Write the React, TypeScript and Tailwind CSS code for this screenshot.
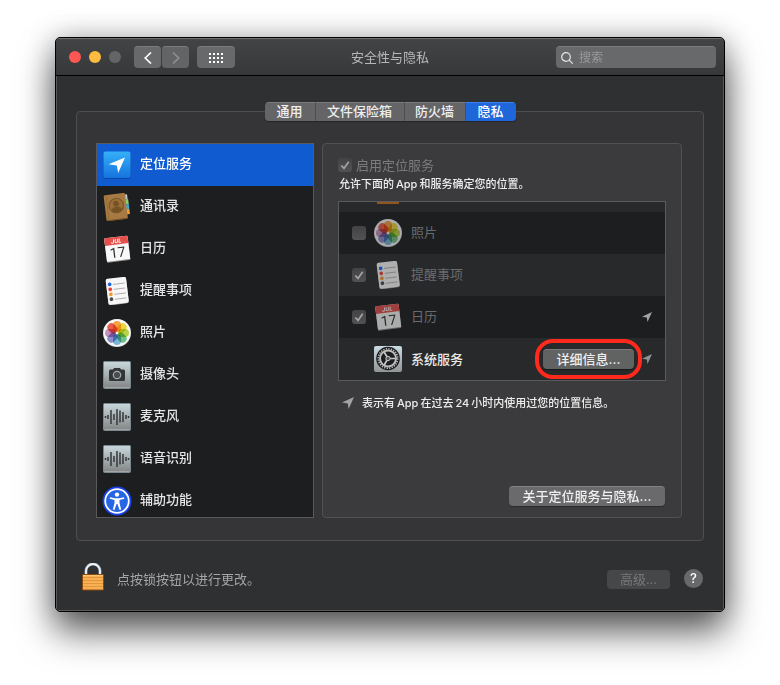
import React from "react";

type IconProps = { className?: string };

function LocationArrow({ className }: IconProps) {
  return (
    <svg viewBox="0 0 12 12" className={className} aria-hidden="true">
      <path d="M12 0 6.6 12 5.8 6.6 0 5.6Z" fill="currentColor" />
    </svg>
  );
}

function LocationIcon() {
  return (
    <svg viewBox="0 0 28 28" className="size-7" aria-hidden="true">
      <defs>
        <linearGradient id="loc" x1="0" y1="0" x2="0" y2="1">
          <stop offset="0" stopColor="#35b0f8" />
          <stop offset="1" stopColor="#1673df" />
        </linearGradient>
      </defs>
      <rect x="0.5" y="1" width="27" height="27" rx="2" fill="#0a48a8" />
      <rect x="0.5" y="0.5" width="27" height="26.5" rx="2" fill="url(#loc)" />
      <path d="M22 6.5 15.2 22l-1.4-7.4-8.300-1.300Z" fill="#fff" />
    </svg>
  );
}

function ContactsIcon() {
  return (
    <svg viewBox="0 0 28 28" className="size-7" aria-hidden="true">
      <g transform="rotate(-7 14 14)">
        <rect x="21" y="2.500" width="4.500" height="5" fill="#b9c4cc" />
        <rect x="21" y="7.500" width="5" height="5" fill="#8ccf6a" />
        <rect x="21" y="12.500" width="5" height="5" fill="#35a8dc" />
        <rect x="21" y="17.500" width="5" height="5" fill="#eda03c" />
        <rect x="2" y="0.800" width="21.500" height="26" rx="1.500" fill="#a67a42" />
        <path d="M2.500 26.500h20.500" stroke="#765226" />
        <path d="M4.500 1v25.500" stroke="#96692f" strokeWidth="0.800" />
        <circle cx="13.500" cy="12.500" r="7.200" fill="#9a6e37" stroke="#765226" />
        <circle cx="13.500" cy="10.600" r="2.900" fill="#765226" />
        <path d="M8.300 17.200c.8-3 3-3.400 5.200-3.400s4.400.4 5.200 3.400c-2.800 3-7.600 3-10.400 0Z" fill="#765226" />
      </g>
    </svg>
  );
}

function CalendarIcon() {
  return (
    <svg viewBox="0 0 28 28" className="size-7" aria-hidden="true">
      <g transform="rotate(-7 14 14)">
        <rect x="2.500" y="3" width="23.500" height="23.500" rx="1" fill="#8f8f8f" />
        <rect x="2.500" y="2" width="23.500" height="23.500" rx="1" fill="#f8f8f8" />
        <path d="M2.500 3a1 1 0 0 1 1-1h21.500a1 1 0 0 1 1 1v6.500h-23.500Z" fill="#e5504c" />
        <text x="14.200" y="8" fontSize="5.500" fontWeight="700" fontStyle="italic" textAnchor="middle" fill="#fff" fontFamily="Inter, sans-serif">JUL</text>
        <text x="14.200" y="22.300" fontSize="14" fontWeight="400" textAnchor="middle" fill="#303030" fontFamily="Roboto, sans-serif">17</text>
      </g>
    </svg>
  );
}

const reminderDots = ["#2065e8", "#ea4335", "#f39a2e", "#4b4b50"];

function RemindersIcon() {
  return (
    <svg viewBox="0 0 28 28" className="size-7" aria-hidden="true">
      <g transform="rotate(-7 14 14)">
        <rect x="4" y="1.500" width="20.500" height="26" rx="2" fill="#999" />
        <rect x="4" y="0.800" width="20.500" height="26" rx="2" fill="#f7f7f7" />
        {reminderDots.map((color, i) => (
          <g key={color}>
            <circle cx="7.500" cy={6.5 + i * 5} r="1.900" fill={color} />
            <path d={`M11 ${7 + i * 5}h11.500`} stroke="#aaa" strokeWidth="0.900" />
          </g>
        ))}
      </g>
    </svg>
  );
}

const petals = ["#f9a12e", "#f2d928", "#b5d43a", "#66c07c", "#6bb5dc", "#8486cc", "#c38bbf", "#f0503c"];

function PhotosIcon() {
  return (
    <svg viewBox="0 0 28 28" className="size-7" aria-hidden="true">
      <circle cx="14" cy="14" r="14" fill="#d2d2d2" />
      <circle cx="14" cy="13.800" r="13.500" fill="#f8f8f8" />
      {petals.map((color, i) => (
        <rect
          key={color}
          x="10"
          y="2"
          width="8"
          height="10.800"
          rx="4"
          fill={color}
          opacity="0.900"
          className="mix-blend-multiply"
          transform={`rotate(${i * 45} 14 14)`}
        />
      ))}
    </svg>
  );
}

function MetalTile({ children }: { children: React.ReactNode }) {
  return (
    <svg viewBox="0 0 28 28" className="size-7" aria-hidden="true">
      <defs>
        <linearGradient id="metal" x1="0" y1="0" x2="0" y2="1">
          <stop offset="0" stopColor="#c9d8dd" />
          <stop offset="1" stopColor="#828484" />
        </linearGradient>
      </defs>
      <rect x="0.500" y="0.500" width="27" height="27" rx="1" fill="url(#metal)" stroke="#79898f" />
      <path d="M1.500 26.500h25" stroke="#a5a5a5" />
      {children}
    </svg>
  );
}

function CameraIcon() {
  return (
    <MetalTile>
      <path d="M7.500 8.500h2.500l1-1.500h6l1 1.500h2.500a1.500 1.500 0 0 1 1.500 1.500v8.500a1.500 1.500 0 0 1-1.500 1.500h-13a1.500 1.500 0 0 1-1.500-1.500v-8.500a1.500 1.500 0 0 1 1.500-1.500Z" fill="#333537" />
      <circle cx="14" cy="14" r="3.700" fill="#4a4c4e" stroke="#a2adb1" strokeWidth="1.200" />
    </MetalTile>
  );
}

function WaveIcon() {
  return (
    <MetalTile>
      <path
        d="M2.500 13v2M5 12v4M8 7v14M11 11v6M14 6v16M17 7.500v12M20 9v10M23 12v4M25.500 13v2"
        stroke="#35393b"
        strokeWidth="1.500"
      />
    </MetalTile>
  );
}

function AccessibilityIcon() {
  return (
    <svg viewBox="0 0 30 30" className="-m-px size-[30px]" aria-hidden="true">
      <circle cx="15" cy="15" r="14.500" fill="#1740e8" />
      <circle cx="15" cy="15" r="11.800" fill="#2566e4" stroke="#fff" strokeWidth="1.800" />
      <circle cx="15" cy="8.600" r="2.200" fill="#fff" />
      <path d="M8 11.200l5 1h4l5-1 .3 1.500-4.800 1.300v3l1.700 6.600-1.600.5-2.200-6.100h-.8l-2.200 6.100-1.600-.5 1.700-6.600v-3l-4.800-1.300Z" fill="#fff" />
    </svg>
  );
}

function GearIcon() {
  return (
    <svg viewBox="0 0 28 28" className="size-7" aria-hidden="true">
      <defs>
        <linearGradient id="gearbg" x1="0" y1="0" x2="0" y2="1">
          <stop offset="0" stopColor="#c9dbe3" />
          <stop offset="1" stopColor="#929596" />
        </linearGradient>
      </defs>
      <rect x="0" y="1" width="28" height="26" rx="2" fill="url(#gearbg)" />
      <circle cx="14" cy="13.500" r="11.800" fill="#1d1e1f" />
      <circle cx="14" cy="13.500" r="9.700" fill="none" stroke="#bdbdbd" strokeWidth="1.600" strokeDasharray="1.300 1.239" />
      <circle cx="14" cy="13.500" r="8" fill="none" stroke="#bdbdbd" strokeWidth="2" />
      <path d="M14 13.500h7.500M14 13.500l-3.800-6.500M14 13.500l-3.800 6.500" stroke="#c8c8c8" strokeWidth="1.700" />
      <circle cx="14" cy="13.500" r="2.200" fill="#55585a" stroke="#c8c8c8" />
    </svg>
  );
}

function LockIcon() {
  return (
    <svg viewBox="0 0 22 28" className="h-7 w-[22px]" aria-hidden="true">
      <path d="M4 13V8a7 7 0 0 1 14 0v5" fill="none" stroke="#8597a5" strokeWidth="3" />
      <path d="M4 13V8a7 7 0 0 1 14 0v5" fill="none" stroke="#f0f5f8" strokeWidth="1.800" />
      <rect x="0.500" y="11.500" width="21" height="15.500" rx="0.500" fill="#f9b052" stroke="#8a4a10" />
      <path d="M1 14.500h20M1 17.500h20M1 20.500h20M1 23.500h20" stroke="#e2963c" />
      <path d="M1 12.500h20" stroke="#fbc777" />
    </svg>
  );
}

function CheckBox({ id, checked }: { id: string; checked: boolean }) {
  return (
    <span className="grid size-3.5 shrink-0">
      <input
        id={id}
        type="checkbox"
        defaultChecked={checked}
        disabled
        className="col-start-1 row-start-1 size-3.5 appearance-none rounded-[3px] bg-linear-to-b from-[#434345] to-[#525254]"
      />
      {checked && (
        <svg viewBox="0 0 14 14" className="pointer-events-none col-start-1 row-start-1 size-3.5" aria-hidden="true">
          <path d="M3.300 7.500 6 10.400 10.700 3.700" fill="none" stroke="#a5a5a6" strokeWidth="1.700" />
        </svg>
      )}
    </span>
  );
}

const categories = [
  { name: "定位服务", icon: <LocationIcon /> },
  { name: "通讯录", icon: <ContactsIcon /> },
  { name: "日历", icon: <CalendarIcon /> },
  { name: "提醒事项", icon: <RemindersIcon /> },
  { name: "照片", icon: <PhotosIcon /> },
  { name: "摄像头", icon: <CameraIcon /> },
  { name: "麦克风", icon: <WaveIcon /> },
  { name: "语音识别", icon: <WaveIcon /> },
  { name: "辅助功能", icon: <AccessibilityIcon /> },
];

const tabs = [
  { name: "通用", width: "w-[51px]" },
  { name: "文件保险箱", width: "w-[89px]" },
  { name: "防火墙", width: "w-[61px]" },
  { name: "隐私", width: "w-[50px]" },
];

const apps = [
  { id: "photos", name: "照片", icon: <PhotosIcon />, checked: false, recent: false },
  { id: "reminders", name: "提醒事项", icon: <RemindersIcon />, checked: true, recent: false },
  { id: "calendar", name: "日历", icon: <CalendarIcon />, checked: true, recent: true },
];

function TitleBar() {
  return (
    <header className="grid h-[38px] grid-cols-[1fr_auto_1fr] items-center border-t border-b border-t-[#707173] border-b-black bg-linear-to-b from-[#434446] to-[#373839] px-2">
      <div className="flex items-center pl-[5px]">
        <div className="flex gap-2">
          <button aria-label="关闭" className="size-3 rounded-full bg-[#fc5753]" />
          <button aria-label="最小化" className="size-3 rounded-full bg-[#fdbc40]" />
          <button aria-label="缩放" disabled className="size-3 rounded-full bg-[#656567]" />
        </div>
        <div className="ml-[13px] flex gap-px">
          <button aria-label="后退" className="grid h-[22px] w-[27px] place-items-center rounded-[4px] border-t border-[#7b7c7e] bg-[#68696b]">
            <svg viewBox="0 0 8 12" className="h-3 w-2"><path d="M7 .500 1.200 6 7 11.500" fill="none" stroke="#fff" strokeWidth="1.700" /></svg>
          </button>
          <button aria-label="前进" disabled className="grid h-[22px] w-[27px] place-items-center rounded-[4px] border-t border-[#7b7c7e] bg-[#636466]">
            <svg viewBox="0 0 8 12" className="h-3 w-2"><path d="M1 .500 6.800 6 1 11.500" fill="none" stroke="#919294" strokeWidth="1.500" /></svg>
          </button>
        </div>
        <button aria-label="显示全部" className="ml-2 grid h-[22px] w-[38px] place-items-center rounded-[4px] border-t border-[#7b7c7e] bg-[#68696b]">
          <svg viewBox="0 0 14 10" className="h-2.5 w-3.5" fill="#fff">
            {[0, 4, 8].map((y) => [0, 4, 8, 12].map((x) => <rect key={`${x}-${y}`} x={x} y={y} width="2" height="2" />))}
          </svg>
        </button>
      </div>
      <h1 className="text-[13px] leading-5 text-[#b6b7b8]">安全性与隐私</h1>
      <label className="ml-auto flex h-[22px] w-40 items-center gap-1.5 rounded-[4px] border-t border-[#7b7c7e] bg-[#68696b] pl-[5px]">
        <svg viewBox="0 0 12 12" className="size-3 shrink-0" fill="none" stroke="#e6e6e6" strokeWidth="1.200" aria-hidden="true">
          <circle cx="5" cy="5" r="4.300" /><path d="m8.200 8.200 3.500 3.500" />
        </svg>
        <input aria-label="搜索" placeholder="搜索" className="w-full min-w-0 bg-transparent text-xs text-white outline-none placeholder:text-[#98999a]" />
      </label>
    </header>
  );
}

function LocationPanel() {
  return (
    <section className="flex min-w-0 flex-1 flex-col rounded-[4px] border border-[#515153] bg-[#3b3b3d] px-[15px] pt-3.5 pb-[11px]">
      <div className="flex h-3.5 items-center gap-1">
        <CheckBox id="enable" checked />
        <label htmlFor="enable" className="text-[13px] leading-5 text-[#7b7b7c]">启用定位服务</label>
      </div>
      <p className="mt-1 pl-px text-[11px] leading-4 font-medium text-[#ededed]">
        允许下面的<span className="mx-0.5">App</span>和服务确定您的位置。
      </p>
      <ul className="mt-[9px] overflow-hidden border border-[#5b5b5d]">
        <li className="h-2.5 bg-[#28292b] pl-[38px]" aria-hidden="true">
          <span className="block h-0.5 w-[22px] bg-[#8f561d]" />
        </li>
        {apps.map((app) => (
          <li key={app.id} className="flex h-[42px] items-center px-[13px] odd:bg-[#28292b] even:bg-[#1d1e20]">
            <CheckBox id={app.id} checked={app.checked} />
            <span className="ml-2 opacity-65">{app.icon}</span>
            <label htmlFor={app.id} className="ml-[9px] flex-1 pb-0.5 text-[13px] leading-5 text-[#6a6b6c]">{app.name}</label>
            {app.recent && <LocationArrow className="size-2.5 text-[#a3a4a5]" />}
          </li>
        ))}
        <li className="flex h-[42px] items-center bg-[#28292b] pr-[13px] pl-[35px]">
          <GearIcon />
          <span className="ml-[9px] flex-1 text-[13px] leading-5 font-medium text-[#e9e9e9]">系统服务</span>
          <div className="relative mr-2">
            <button className="block h-5 w-[91px] rounded-[4px] border-t border-[#7a7b7b] bg-[#616362] text-[13px] leading-4 font-medium text-[#eee] shadow-[0_1px_1px_rgba(0,0,0,0.4)]"><span className="block pb-0.5">详细信息...</span></button>
            <span className="pointer-events-none absolute -inset-x-2 -inset-y-[10px] rounded-[18px] border-4 border-[#ff2a1c]" />
          </div>
          <LocationArrow className="size-2.5 text-[#8f9091]" />
        </li>
      </ul>
      <p className="mt-3.5 flex items-center gap-2 pl-1 text-[11px] leading-4 font-medium text-[#ededed]">
        <LocationArrow className="size-3 text-[#a3a3a4]" />
        <span>
          表示有<span className="mx-0.5">App</span>在过去<span className="mx-0.5">24</span>小时内使用过您的位置信息。
        </span>
      </p>
      <button className="mt-auto ml-auto mr-px h-5 w-[156px] rounded-[4px] border-t border-[#828284] bg-[#6a6a6c] text-[13px] leading-4 font-medium text-[#f0f0f0] shadow-[0_1px_1px_rgba(0,0,0,0.3)]"><span className="block pb-0.5">关于定位服务与隐私...</span></button>
    </section>
  );
}

export default function App() {
  return (
    <div className="min-h-screen overflow-hidden bg-white px-[55px] pt-[37px] pb-[73px] font-[Inter,'Noto_Sans_CJK_SC',sans-serif]">
      <div className="rounded-[5px] shadow-[0_20px_36px_rgba(0,0,0,0.62),0_0_28px_rgba(0,0,0,0.25)]">
        <div className="overflow-hidden rounded-[5px] border border-black bg-[#2f3032]">
          <TitleBar />
          <main className="border border-t-0 border-[#58595b] px-[19px] pt-[26px]">
            <div role="tablist" className="relative z-10 mx-auto -mb-2.5 flex h-[19px] w-fit overflow-hidden rounded-[4px] shadow-[0_1px_1px_rgba(0,0,0,0.3)]">
              {tabs.map((tab) => (
                <button
                  key={tab.name}
                  role="tab"
                  aria-selected={tab.name === "隐私"}
                  className={`${tab.width} border-t border-r border-t-[#7b7b7d] border-r-[#4d4d4f] bg-[#656567] text-[13px] leading-4 font-medium text-[#eee] last:border-r-0 aria-selected:border-t-[#3c82ee] aria-selected:bg-[#1e66da] aria-selected:text-white`}
                >
                  <span className="block pb-0.5">{tab.name}</span>
                </button>
              ))}
            </div>
            <div className="flex gap-2 rounded-[4px] border border-[#4e4e50] bg-[#353537] pt-[31px] pr-[21px] pb-[22px] pl-[19px]">
              <nav className="h-[375px] w-[218px] shrink-0 overflow-hidden border border-[#5a5a5c] bg-[#1d1e20]">
                {categories.map((item, i) => (
                  <button
                    key={item.name}
                    aria-current={i === 0}
                    className="flex h-[42px] w-full items-center gap-[9px] pl-1.5 text-left text-[13px] leading-5 font-medium text-[#e6e6e6] aria-[current=true]:bg-[#0f5bcf] aria-[current=true]:text-white"
                  >
                    {item.icon}
                    <span className="pb-1">{item.name}</span>
                  </button>
                ))}
              </nav>
              <LocationPanel />
            </div>
            <footer className="flex items-center pt-[22px] pr-px pb-[19px] pl-1.5">
              <button aria-label="解锁"><LockIcon /></button>
              <p className="mt-1 ml-[13px] flex-1 text-[13px] leading-5 text-[#a5a6a7]">点按锁按钮以进行更改。</p>
              <button disabled className="mt-1 h-[19px] w-[63px] rounded-[4px] bg-[#464749] text-[13px] leading-[18px] text-[#77787a]">高级...</button>
              <button aria-label="帮助" className="mt-[3px] ml-3.5 size-[19px] rounded-full bg-[#68696b] text-[13px] leading-[19px] font-medium text-white">?</button>
            </footer>
          </main>
        </div>
      </div>
    </div>
  );
}
